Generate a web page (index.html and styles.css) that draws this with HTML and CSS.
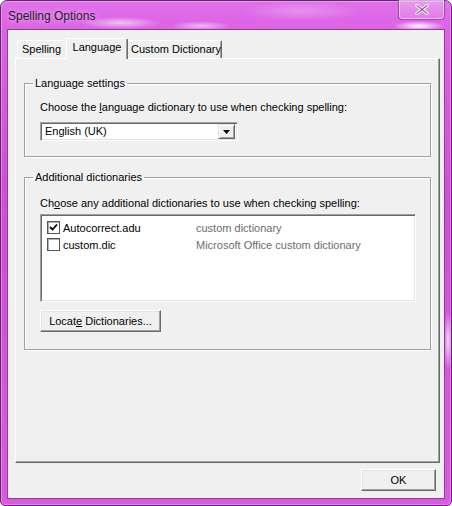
FILE: index.html
```html
<!DOCTYPE html>
<html>
<head>
<meta charset="utf-8">
<link rel="stylesheet" href="styles.css">
</head>
<body>
<div class="window">
  <div class="titlebar">
    <span class="title">Spelling Options</span>
    <div class="close">
      <svg width="14" height="11" viewBox="0 0 14 11"><path d="M2 1.5 L12 9.5 M12 1.5 L2 9.5" stroke="#fff" stroke-width="3.2" stroke-linecap="round"/><path d="M2 1.5 L12 9.5 M12 1.5 L2 9.5" stroke="#8a5a8e" stroke-width="1.2" stroke-linecap="round"/></svg>
    </div>
  </div>
  <div class="client">
    <div class="tabs">
      <div class="tab t-spelling">Spelling</div>
      <div class="tab t-language active">Language</div>
      <div class="tab t-custom">Custom Dictionary</div>
    </div>
    <div class="pane">
      <fieldset class="group g1">
        <legend>Language settings</legend>
        <div class="label">Choose the <u>l</u>anguage dictionary to use when checking spelling:</div>
        <div class="combo">
          <span class="combo-text">English (UK)</span>
          <span class="combo-btn"><svg width="7" height="4" viewBox="0 0 7 4"><path d="M0 0H7L3.5 4Z" fill="#000"/></svg></span>
        </div>
      </fieldset>
      <fieldset class="group g2">
        <legend>Additional dictionaries</legend>
        <div class="label">Ch<u>o</u>ose any additional dictionaries to use when checking spelling:</div>
        <div class="listbox">
          <div class="row">
            <span class="check"><svg width="9" height="9" viewBox="0 0 9 9"><path d="M1 4 L3.5 6.5 L8 1.5" fill="none" stroke="#000" stroke-width="1.8"/></svg></span>
            <span class="name">Autocorrect.adu</span>
            <span class="desc">custom dictionary</span>
          </div>
          <div class="row">
            <span class="check"></span>
            <span class="name">custom.dic</span>
            <span class="desc">Microsoft Office custom dictionary</span>
          </div>
        </div>
        <button class="btn locate">Locat<u>e</u> Dictionaries...</button>
      </fieldset>
    </div>
    <div class="footer">
      <button class="btn ok">OK</button>
    </div>
  </div>
</div>
</body>
</html>
```

FILE: styles.css
```css
html, body {
  margin: 0;
  padding: 0;
  background: #ffffff;
}
body {
  width: 452px;
  height: 506px;
  font-family: "Liberation Sans", Arial, sans-serif;
  font-size: 11px;
  color: #000;
}
.window {
  box-sizing: border-box;
  width: 452px;
  height: 506px;
  border: 1px solid #5e2a66;
  border-radius: 7px 7px 5px 5px;
  padding: 0 7px 7px 7px;
  background:
    radial-gradient(ellipse 40px 6px at 120px 22px, rgba(255,255,255,0.6), rgba(255,255,255,0) 100%),
    radial-gradient(ellipse 30px 5px at 200px 25px, rgba(255,255,255,0.55), rgba(255,255,255,0) 100%),
    radial-gradient(ellipse 26px 5px at 418px 25px, rgba(255,255,255,0.95), rgba(255,255,255,0) 100%),
    radial-gradient(ellipse 60px 10px at 300px 10px, rgba(255,255,255,0.25), rgba(255,255,255,0) 100%),
    radial-gradient(ellipse 4px 30px at 447px 340px, rgba(255,255,255,0.8), rgba(255,255,255,0) 100%),
    linear-gradient(to bottom, #e070e9 0px, #dc62e5 30px, #d24cda 200px, #da5ae2 506px);
  box-shadow: inset 1px 1px 0 rgba(255,255,255,0.3), inset -1px -1px 0 rgba(255,255,255,0.25);
  display: flex;
  flex-direction: column;
}
.titlebar {
  height: 29px;
  display: flex;
  align-items: flex-start;
  justify-content: space-between;
  flex: none;
}
.title {
  font-family: "Liberation Sans", Arial, sans-serif;
  font-size: 12px;
  color: #1e1e1e;
  margin-top: 8px;
  text-shadow: 0 0 6px rgba(255,255,255,0.7);
}
.close {
  box-sizing: border-box;
  width: 47px;
  height: 20px;
  margin-top: -1px;
  margin-right: -1px;
  border: 1px solid #9a4aa0;
  border-top: none;
  border-radius: 0 0 4px 4px;
  background: linear-gradient(to bottom, rgba(255,255,255,0.3), rgba(255,255,255,0.12));
  box-shadow: inset 0 0 0 1px rgba(255,255,255,0.5);
  display: flex;
  align-items: center;
  justify-content: center;
}
.client {
  box-sizing: border-box;
  width: 436px;
  height: 468px;
  background: #f0f0f0;
  box-shadow: 0 0 0 1px #8e3f94;
  padding: 8px 4px 0 7px;
  display: flex;
  flex-direction: column;
}
.tabs {
  display: flex;
  align-items: flex-end;
  height: 20px;
  padding-left: 2px;
  position: relative;
  z-index: 1;
}
.tab {
  box-sizing: border-box;
  height: 18px;
  background: #f0f0f0;
  border-top: 1px solid #ffffff;
  border-left: 1px solid #ffffff;
  border-right: 1px solid #696969;
  border-radius: 2px 2px 0 0;
  box-shadow: inset -1px 0 0 #a0a0a0;
  line-height: 16px;
  text-align: center;
  white-space: nowrap;
}
.t-spelling { width: 51px; padding-right: 2px; }
.t-language { width: 58px; }
.t-custom { width: 96px; padding-left: 4px; }
.tab.active {
  height: 21px;
  width: 62px;
  margin: 0 -2px -1px -2px;
  position: relative;
  z-index: 2;
  line-height: 17px;
}
.pane {
  box-sizing: border-box;
  width: 425px;
  height: 405px;
  background: #f0f0f0;
  border-top: 1px solid #ffffff;
  border-left: 1px solid #ffffff;
  border-right: 1px solid #696969;
  border-bottom: 1px solid #696969;
  box-shadow: inset -1px -1px 0 #a0a0a0;
  padding: 18px 8px 0 8px;
  display: flex;
  flex-direction: column;
}
.group {
  margin: 0;
  border: 1px solid #a0a0a0;
  box-shadow: 1px 1px 0 #ffffff, inset 1px 1px 0 #ffffff;
  padding: 0 15px;
  min-width: 0;
}
.group legend {
  padding: 0 2px;
  margin-left: -7px;
  line-height: 13px;
  height: 13px;
}
.g1 { padding-top: 11px; padding-bottom: 15px; }
.g2 { margin-top: 14px; padding-top: 13px; padding-bottom: 17px; }
.label {
  line-height: 13px;
  height: 13px;
  white-space: nowrap;
}
.combo {
  box-sizing: border-box;
  width: 198px;
  height: 19px;
  margin-top: 8px;
  background: #fff;
  border-top: 1px solid #a0a0a0;
  border-left: 1px solid #a0a0a0;
  border-right: 1px solid #ffffff;
  border-bottom: 1px solid #ffffff;
  box-shadow: inset 1px 1px 0 #696969, inset -1px -1px 0 #e3e3e3;
  display: flex;
  align-items: center;
  justify-content: space-between;
  padding: 2px 2px 2px 4px;
}
.combo-text { line-height: 13px; }
.combo-btn {
  box-sizing: border-box;
  width: 17px;
  height: 15px;
  background: #f0f0f0;
  border-top: 1px solid #e3e3e3;
  border-left: 1px solid #e3e3e3;
  border-right: 1px solid #696969;
  border-bottom: 1px solid #696969;
  box-shadow: inset 1px 1px 0 #fff, inset -1px -1px 0 #a0a0a0;
  display: flex;
  align-items: center;
  justify-content: center;
}
.listbox {
  box-sizing: border-box;
  width: 376px;
  height: 88px;
  margin-top: 4px;
  background: #fff;
  border-top: 1px solid #a0a0a0;
  border-left: 1px solid #a0a0a0;
  border-right: 1px solid #ffffff;
  border-bottom: 1px solid #ffffff;
  box-shadow: inset 1px 1px 0 #696969, inset -1px -1px 0 #e3e3e3;
  padding: 4px 0 0 6px;
}
.row {
  display: flex;
  align-items: center;
  height: 17px;
}
.check {
  box-sizing: border-box;
  width: 13px;
  height: 13px;
  background: #fff;
  border: 1px solid #555555;
  box-shadow: inset 1px 1px 0 #b0b0b0;
  display: flex;
  align-items: center;
  justify-content: center;
  flex: none;
}
.name {
  width: 133px;
  margin-left: 3px;
  flex: none;
}
.desc {
  color: #6d6d6d;
  white-space: nowrap;
}
.btn {
  box-sizing: border-box;
  font-family: "Liberation Sans", Arial, sans-serif;
  font-size: 11px;
  color: #000;
  height: 22px;
  background: #f0f0f0;
  border-top: 1px solid #ffffff;
  border-left: 1px solid #ffffff;
  border-right: 1px solid #696969;
  border-bottom: 1px solid #696969;
  box-shadow: inset -1px -1px 0 #a0a0a0, inset 1px 1px 0 #e3e3e3;
  border-radius: 0;
  padding: 0;
  margin: 0;
  display: block;
}
.locate {
  width: 121px;
  margin-top: 8px;
}
.footer {
  display: flex;
  justify-content: flex-end;
  padding-top: 6px;
}
.ok {
  width: 75px;
  margin-right: 4px;
}
```
